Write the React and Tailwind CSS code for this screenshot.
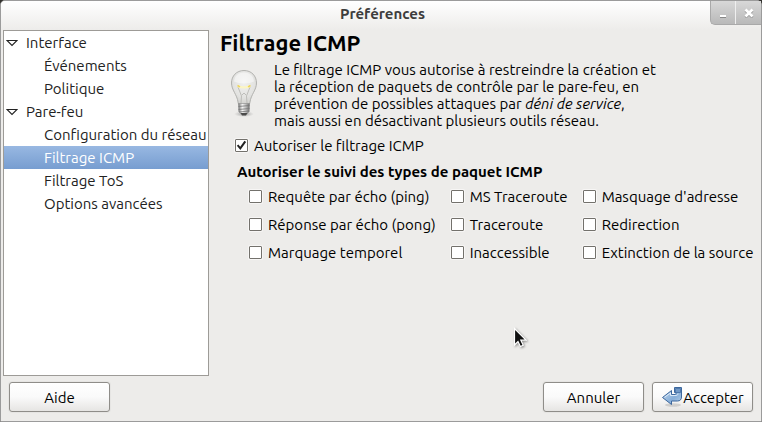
import { useState } from "react";

const tree = [
  { label: "Interface", children: ["Événements", "Politique"] },
  {
    label: "Pare-feu",
    children: ["Configuration du réseau", "Filtrage ICMP", "Filtrage ToS", "Options avancées"],
  },
];

const columns = [
  ["Requête par écho (ping)", "Réponse par écho (pong)", "Marquage temporel"],
  ["MS Traceroute", "Traceroute", "Inaccessible"],
  ["Masquage d'adresse", "Redirection", "Extinction de la source"],
];

function CheckOption({ label, defaultChecked = false }) {
  return (
    <label className="flex h-7 items-center gap-1.5 whitespace-nowrap">
      <span className="relative flex size-[13px] shrink-0">
        <input
          type="checkbox"
          defaultChecked={defaultChecked}
          className="peer size-[13px] appearance-none rounded-[1px] border border-[#73716c] bg-white shadow-[0_0_0_1px_#f7f6f5]"
        />
        <svg
          viewBox="0 0 13 13"
          className="pointer-events-none absolute inset-0 hidden size-[13px] peer-checked:block"
          fill="none"
          stroke="#222"
          strokeWidth="2"
        >
          <path d="M2.600 6.200 5.300 9.300 10.300 2.300" />
        </svg>
      </span>
      {label}
    </label>
  );
}

function DialogButton({ children }) {
  return (
    <button
      type="button"
      className="flex h-[30px] w-[101px] items-center justify-center rounded-[3px] border border-[#8f8d89] bg-linear-to-b from-white via-[#fafafa] to-[#e6e5e3] shadow-[0_0_0_1px_#e6e5e3]"
    >
      {children}
    </button>
  );
}

function Bulb() {
  return (
    <svg viewBox="0 0 28 50" className="h-[50px] w-7 shrink-0" fill="none" aria-hidden="true">
      <defs>
        <radialGradient id="glass" cx=".5" cy=".35" r=".65">
          <stop offset="0" stopColor="#f0f0ef" />
          <stop offset=".65" stopColor="#e3e3e1" />
          <stop offset="1" stopColor="#cfcfcc" />
        </radialGradient>
        <linearGradient id="cap">
          <stop offset="0" stopColor="#777" />
          <stop offset=".35" stopColor="#f5f5f5" />
          <stop offset=".7" stopColor="#b5b5b5" />
          <stop offset="1" stopColor="#6d6d6d" />
        </linearGradient>
        <radialGradient id="shade">
          <stop offset="0" stopColor="#777" stopOpacity=".7" />
          <stop offset="1" stopColor="#999" stopOpacity="0" />
        </radialGradient>
      </defs>
      <ellipse cx="14" cy="45" rx="10" ry="3" fill="url(#shade)" />
      <path
        d="M14 1.500C6.500 1.500 1.500 7 1.500 14c0 7 5.500 11.500 6.500 19 .2 2 1.200 3 2.700 3h6.600c1.500 0 2.500-1 2.700-3 1-7.500 6.500-12 6.500-19C26.500 7 21.500 1.500 14 1.500Z"
        fill="url(#glass)"
        stroke="#b2b2af"
      />
      <path d="M4 12.500C4.500 6.500 9 3.500 14 3.500S23.500 6.500 24 12.500c-5 2.500-15 2.500-20 0Z" fill="#fff" opacity=".45" />
      <path d="M8 18l3.500 9-.5 7M20 18l-3.500 9 .5 7M12 26l2-2 2 2" stroke="#b3b2ae" strokeWidth=".8" />
      <path d="M8 17c3 1.800 9 1.800 12 0" stroke="#fbf5c4" strokeWidth="2.400" />
      <path d="M7.500 16.500l2.500 1.300M20.500 16.500l-2.500 1.300" stroke="#edd45c" strokeWidth="1.500" />
      <path d="M8.500 34.500h11l-.3 8-2 2h-6.400l-2-2Z" fill="url(#cap)" stroke="#888" strokeWidth=".6" />
      <path d="M8.500 37.500l11-1M8.500 40.500l11-1M9 43l10-1" stroke="#777" strokeWidth=".8" />
      <path d="M10.500 44h7l-1.500 2.500h-4Z" fill="#4a4a4a" />
    </svg>
  );
}

function ApplyIcon() {
  return (
    <svg viewBox="0 0 22 22" className="size-[22px] shrink-0" aria-hidden="true">
      <defs>
        <linearGradient id="arrow" x1="0" y1="0" x2="1" y2="1">
          <stop offset="0" stopColor="#c7dcf0" />
          <stop offset=".6" stopColor="#87aed8" />
          <stop offset="1" stopColor="#b5cfe9" />
        </linearGradient>
      </defs>
      <ellipse cx="12" cy="19" rx="8" ry="1.800" fill="#000" opacity=".13" />
      <path
        d="M13.500 1.500h7v9.500c0 2.500-1.500 4-4 4h-6v3.500L1.500 11.500l9-7v4h3.500c.7 0 1-.3 1-1V6.500h-1.500Z"
        fill="url(#arrow)"
        stroke="#3c679d"
        strokeLinejoin="round"
      />
      <path d="M14.500 2.500h5v4h-5Z" fill="#7198c6" stroke="#3c679d" strokeWidth=".7" />
      <path d="M3.500 11.300 9.500 7v2.500h5.500c1.200 0 2-.6 2-2" fill="none" stroke="#e4effa" strokeWidth=".9" />
    </svg>
  );
}

export default function App() {
  const [selected, setSelected] = useState("Filtrage ICMP");

  return (
    <div className="relative min-h-screen bg-[#33322e] font-['Ubuntu','Noto_Sans',sans-serif] text-[15px] leading-[17px] text-black">
      <main className="flex min-h-screen flex-col rounded-t-[5px] border border-[#9b9b9b] bg-[#edecea]">
        <header className="flex h-[29px] items-start rounded-t-[4px] bg-linear-to-b from-white to-[#edecea]">
          <h1 className="flex-1 pt-1 pl-[54px] text-center font-bold text-[#3d3d3d]">Préférences</h1>
          <div className="flex h-6 overflow-hidden rounded-bl-[5px] border-b border-l border-[#a9a9a9] bg-linear-to-b from-[#d8d8d8] to-[#b9b9b9]">
            <button type="button" aria-label="Réduire" className="flex w-[25px] items-center justify-center border-r border-[#efefef]">
              <svg viewBox="0 0 10 10" className="size-2.5">
                <path d="M2 7h6v2H2Z" fill="#fff" />
                <path d="M2 9.500h6" stroke="#888" />
              </svg>
            </button>
            <button type="button" aria-label="Fermer" className="flex w-[25px] items-center justify-center">
              <svg viewBox="0 0 10 10" className="size-2.5" fill="none" strokeWidth="2.600">
                <path d="M1.500 2.500l7 7m0-7-7 7" stroke="#909090" />
                <path d="M1.500 1.500l7 7m0-7-7 7" stroke="#fff" />
              </svg>
            </button>
          </div>
        </header>

        <div className="flex flex-1 pl-0.5">
          <nav className="w-[206px] shrink-0 border border-[#9d9b97] bg-white">
            <ul>
              {tree.map((group) => (
                <li key={group.label}>
                  <button type="button" className="flex h-[23px] w-full items-center gap-2 pl-0.5 text-[#222]">
                    <svg viewBox="0 0 12 8" className="h-2 w-3" fill="none" stroke="#222" strokeWidth="1.100">
                      <path d="M1 1.500h10L6 6.500Z" />
                    </svg>
                    {group.label}
                  </button>
                  <ul>
                    {group.children.map((item) => (
                      <li key={item}>
                        <button
                          type="button"
                          onClick={() => setSelected(item)}
                          className={
                            item === selected
                              ? "flex h-[23px] w-full items-center bg-linear-to-b from-[#98b8e2] to-[#779dd0] pl-10 whitespace-nowrap text-white"
                              : "flex h-[23px] w-full items-center pl-10 whitespace-nowrap text-[#222]"
                          }
                        >
                          {item}
                        </button>
                      </li>
                    ))}
                  </ul>
                </li>
              ))}
            </ul>
          </nav>

          <section className="min-w-0 flex-1 pl-[11px]">
            <h2 className="text-[22px] leading-[26px] font-bold">Filtrage ICMP</h2>
            <div className="flex gap-4 pt-[5px] pl-2.5">
              <div className="pt-2">
                <Bulb />
              </div>
              <p className="whitespace-nowrap">
                Le filtrage ICMP vous autorise à restreindre la création et
                <br />
                la réception de paquets de contrôle par le pare-feu, en
                <br />
                prévention de possibles attaques par <em>déni de service</em>,
                <br />
                mais aussi en désactivant plusieurs outils réseau.
              </p>
            </div>
            <div className="pt-0.5 pl-[15px]">
              <CheckOption label="Autoriser le filtrage ICMP" defaultChecked />
              <h3 className="pt-1 pb-0.5 pl-0.5 font-bold">Autoriser le suivi des types de paquet ICMP</h3>
              <div className="flex gap-[15px] pl-3.5">
                {columns.map((column) => (
                  <div key={column[0]}>
                    {column.map((label) => (
                      <CheckOption key={label} label={label} />
                    ))}
                  </div>
                ))}
              </div>
            </div>
          </section>
        </div>

        <footer className="flex gap-2 px-2 pt-1.5 pb-[9px]">
          <DialogButton>Aide</DialogButton>
          <div className="flex-1" />
          <DialogButton>Annuler</DialogButton>
          <DialogButton>
            <ApplyIcon />
            Accepter
          </DialogButton>
        </footer>
      </main>

      <svg
        viewBox="0 0 14 22"
        className="pointer-events-none absolute top-[327px] left-[513px] h-[22px] w-3.5 drop-shadow-[1px_1px_1px_rgba(0,0,0,0.4)]"
        aria-hidden="true"
      >
        <path d="M1.500 1.500v16.500l3.500-3.500 2.400 5 2.800-1.300-2.400-5h5.200Z" fill="#111" stroke="#fff" strokeWidth="1.200" />
      </svg>
    </div>
  );
}
